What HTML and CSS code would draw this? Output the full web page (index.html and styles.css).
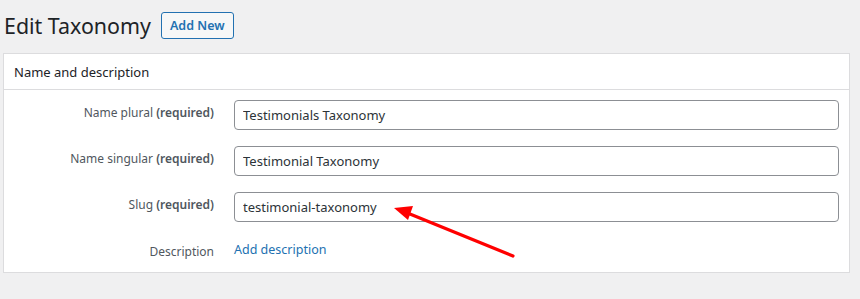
FILE: index.html
```html
<!DOCTYPE html>
<html lang="en">
<head>
<meta charset="utf-8">
<title>Edit Taxonomy</title>
<link rel="stylesheet" href="styles.css">
</head>
<body>
<div class="wrap">
  <div class="title-row">
    <h1 class="page-title">Edit Taxonomy</h1>
    <a class="btn-add" href="#">Add New</a>
  </div>
  <div class="card">
    <div class="card-head">Name and description</div>
    <div class="card-body">
      <div class="row">
        <label class="lbl">Name plural <b>(required)</b></label>
        <input class="field" type="text" value="Testimonials Taxonomy">
      </div>
      <div class="row">
        <label class="lbl">Name singular <b>(required)</b></label>
        <input class="field" type="text" value="Testimonial Taxonomy">
      </div>
      <div class="row">
        <label class="lbl">Slug <b>(required)</b></label>
        <input class="field" type="text" value="testimonial-taxonomy">
      </div>
      <div class="row row-desc">
        <span class="lbl">Description</span>
        <a class="link" href="#">Add description</a>
      </div>
    </div>
  </div>
  <svg class="arrow" width="860" height="299" viewBox="0 0 860 299" xmlns="http://www.w3.org/2000/svg">
    <line x1="513" y1="256" x2="405" y2="212" stroke="#ff0000" stroke-width="3.2" stroke-linecap="round"/>
    <polygon points="394,208 413,206 408,220" fill="#ff0000"/>
  </svg>
</div>
</body>
</html>
```

FILE: styles.css
```css
html, body {
  margin: 0;
  padding: 0;
  background: #f0f0f1;
}
body {
  font-family: "Noto Sans", "Open Sans", sans-serif;
  color: #3c434a;
  font-size: 13px;
}
.wrap {
  position: relative;
  width: 860px;
  height: 299px;
  padding: 0 10px 0 3px;
  box-sizing: border-box;
}
.title-row {
  display: flex;
  align-items: center;
  height: 53px;
  padding-left: 1px;
  padding-bottom: 2px;
  box-sizing: border-box;
}
.page-title {
  margin: 0;
  font-size: 21.4px;
  font-weight: 400;
  color: #1d2327;
  line-height: 1;
}
.btn-add {
  margin-left: 10px;
  display: inline-flex;
  align-items: center;
  height: 27px;
  padding: 0 8px;
  box-sizing: border-box;
  border: 1px solid #2271b1;
  border-radius: 3px;
  background: #f6f7f7;
  color: #2271b1;
  font-size: 12.5px;
  font-weight: 600;
  text-decoration: none;
}
.card {
  background: #fff;
  border: 1px solid #dcdcde;
}
.card-head {
  height: 35px;
  border-bottom: 1px solid #dcdcde;
  display: flex;
  align-items: center;
  padding-left: 10px;
  font-size: 13px;
  color: #1d2327;
}
.card-body {
  display: flex;
  flex-direction: column;
  gap: 16px;
  padding: 10px 10px 4px 0;
}
.row {
  display: grid;
  grid-template-columns: 210px 1fr;
  column-gap: 20px;
  align-items: center;
  height: 30px;
}
.lbl {
  text-align: right;
  color: #50575e;
  font-size: 12px;
  margin-top: -5px;
}
.lbl b {
  font-weight: 600;
}
.field {
  height: 30px;
  box-sizing: border-box;
  border: 1px solid #8c8f94;
  border-radius: 4px;
  padding: 0 8px;
  font-family: "Noto Sans", "Open Sans", sans-serif;
  font-size: 13px;
  color: #2c3338;
  background: #fff;
  width: 100%;
  outline: none;
}
.row-desc .lbl {
  margin-top: -4px;
}
.link {
  color: #2271b1;
  text-decoration: none;
  font-size: 12.5px;
  margin-top: -8px;
}
.arrow {
  position: absolute;
  left: 0;
  top: 0;
  pointer-events: none;
}
```
